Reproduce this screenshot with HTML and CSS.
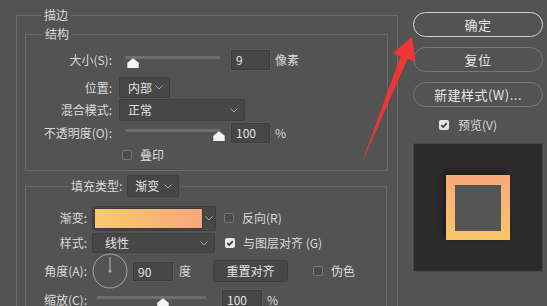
FILE: index.html
```html
<!DOCTYPE html>
<html lang="zh-CN">
<head>
<meta charset="utf-8">
<title>描边</title>
<link rel="stylesheet" href="styles.css">
</head>
<body>
<div class="dialog">
  <fieldset class="group outer">
    <legend class="legend legend-outer">描边</legend>
    <fieldset class="group struct">
      <legend class="legend legend-struct">结构</legend>
      <div class="row r-size">
        <span class="label">大小(S):</span>
        <div class="slider s-short"><span class="track"></span><span class="thumb" style="left:2px"><svg width="12" height="10" viewBox="0 0 12 10"><path d="M6 0.3 L11.7 4.8 L11.7 10 L0.3 10 L0.3 4.8 Z" fill="#f4f4f4"/></svg></span></div>
        <span class="field f-num">9</span>
        <span class="unit">像素</span>
      </div>
      <div class="row r-pos">
        <span class="label">位置:</span>
        <div class="select sel-pos"><span>内部</span><svg class="chev" width="8" height="5" viewBox="0 0 8 5"><path d="M0.5 0.5 L4 4 L7.5 0.5" fill="none" stroke="#a8a8a8"/></svg></div>
      </div>
      <div class="row r-mode">
        <span class="label">混合模式:</span>
        <div class="select sel-mode"><span>正常</span><svg class="chev" width="8" height="5" viewBox="0 0 8 5"><path d="M0.5 0.5 L4 4 L7.5 0.5" fill="none" stroke="#a8a8a8"/></svg></div>
      </div>
      <div class="row r-opacity">
        <span class="label">不透明度(O):</span>
        <div class="slider s-short"><span class="track"></span><span class="thumb" style="left:88px"><svg width="12" height="10" viewBox="0 0 12 10"><path d="M6 0.3 L11.7 4.8 L11.7 10 L0.3 10 L0.3 4.8 Z" fill="#f4f4f4"/></svg></span></div>
        <span class="field f-num">100</span>
        <span class="unit">%</span>
      </div>
      <div class="row r-over">
        <span class="label"></span>
        <span class="check off cb-over"></span>
        <span class="check-label">叠印</span>
      </div>
    </fieldset>

    <fieldset class="group fill">
      <legend class="legend legend-fill">
        <span class="fill-type">填充类型:</span>
        <span class="select sel-fill"><span>渐变</span><svg class="chev" width="8" height="5" viewBox="0 0 8 5"><path d="M0.5 0.5 L4 4 L7.5 0.5" fill="none" stroke="#a8a8a8"/></svg></span>
      </legend>
      <div class="row r-grad">
        <span class="label l-fill">渐变:</span>
        <div class="grad-select"><span class="swatch"></span><span class="grad-arrow"><svg width="8" height="5" viewBox="0 0 8 5"><path d="M0.5 0.5 L4 4 L7.5 0.5" fill="none" stroke="#a8a8a8"/></svg></span></div>
        <span class="check off cb-rev"></span>
        <span class="check-label">反向(R)</span>
      </div>
      <div class="row r-style">
        <span class="label l-fill">样式:</span>
        <div class="select sel-style"><span>线性</span><svg class="chev" width="8" height="5" viewBox="0 0 8 5"><path d="M0.5 0.5 L4 4 L7.5 0.5" fill="none" stroke="#a8a8a8"/></svg></div>
        <span class="check on cb-align"><svg width="10" height="10" viewBox="0 0 10 10"><path d="M2.3 5.2 L4.2 7.1 L7.8 3.1" fill="none" stroke="#3a3a3a" stroke-width="1.7"/></svg></span>
        <span class="check-label">与图层对齐 (G)</span>
      </div>
      <div class="row r-angle">
        <span class="label l-fill">角度(A):</span>
        <svg class="dial" width="36" height="36" viewBox="0 0 36 36"><circle cx="18" cy="18" r="17" fill="none" stroke="#a9a9a9" stroke-width="1"/><line x1="18" y1="18" x2="18" y2="4" stroke="#a9a9a9" stroke-width="1.2"/><circle cx="18" cy="18" r="1.5" fill="#a9a9a9"/></svg>
        <span class="field f-angle">90</span>
        <span class="unit u-deg">度</span>
        <span class="btn-reset">重置对齐</span>
        <span class="check off cb-dither"></span>
        <span class="check-label">伪色</span>
      </div>
      <div class="row r-scale">
        <span class="label l-fill">缩放(C):</span>
        <div class="slider s-long"><span class="track"></span><span class="thumb" style="left:60px"><svg width="12" height="10" viewBox="0 0 12 10"><path d="M6 0.3 L11.7 4.8 L11.7 10 L0.3 10 L0.3 4.8 Z" fill="#f4f4f4"/></svg></span></div>
        <span class="field f-scale">100</span>
        <span class="unit">%</span>
      </div>
    </fieldset>
  </fieldset>

  <div class="side">
    <div class="btn btn-primary">确定</div>
    <div class="btn">复位</div>
    <div class="btn">新建样式(W)...</div>
    <div class="preview-check">
      <span class="check on"><svg width="10" height="10" viewBox="0 0 10 10"><path d="M2.3 5.2 L4.2 7.1 L7.8 3.1" fill="none" stroke="#3a3a3a" stroke-width="1.7"/></svg></span>
      <span class="check-label">预览(V)</span>
    </div>
    <div class="preview">
      <div class="frame"><div class="frame-inner"></div></div>
    </div>
  </div>
</div>

<svg class="arrow" width="547" height="306" viewBox="0 0 547 306">
  <polygon points="361,165 400.5,56.5 393,53 412,37 415.5,61.5 407.5,59" fill="#f03535"/>
</svg>
</body>
</html>
```

FILE: styles.css
```css
* {
  box-sizing: border-box;
}

html,
body {
  margin: 0;
  padding: 0;
}

body {
  width: 547px;
  height: 306px;
  overflow: hidden;
  position: relative;
  background: #535353;
  color: #dadada;
  font-family: "Noto Sans CJK SC", "Noto Sans", sans-serif;
  font-size: 12px;
  line-height: 16px;
}

.dialog {
  display: flex;
  align-items: flex-start;
  padding-left: 16px;
}

/* group boxes */
.group {
  margin: 0;
  min-width: 0;
  border: 1px solid #6a6a6a;
}

.legend {
  padding: 0 3px;
  line-height: 16px;
}

.outer {
  width: 382px;
  height: 330px;
  margin-top: 7px;
  padding: 3px 9px 0 8px;
  flex: none;
}

.legend-outer {
  margin-left: 16px;
}

.struct {
  width: 363px;
  height: 145px;
  padding: 8px 0 0 0;
}

.legend-struct {
  margin-left: 16px;
}

.fill {
  width: 362px;
  margin-top: 4px;
  padding: 9px 0 0 0;
  height: 140px;
}

.legend-fill {
  margin-left: 42px;
  display: flex;
  align-items: center;
  height: 22px;
}

.fill-type {
  margin-right: 5px;
}

/* rows */
.row {
  display: flex;
  align-items: center;
}

.label {
  width: 86px;
  flex: none;
  text-align: right;
}

.label.l-fill {
  width: 61px;
}

.r-size { height: 20px; }
.r-pos { height: 21px; margin-top: 7px; }
.r-mode { height: 22px; margin-top: 1px; }
.r-opacity { height: 20px; margin-top: 2px; }
.r-over { height: 16px; margin-top: 4px; }

.r-grad { height: 24px; }
.r-style { height: 20px; margin-top: 3px; }
.r-angle { height: 36px; }
.r-scale { height: 20px; margin-top: 1px; }

/* slider */
.slider {
  position: relative;
  height: 20px;
  flex: none;
}

.s-short {
  width: 95px;
  margin-left: 13px;
}

.s-long {
  width: 109px;
  margin-left: 10px;
}

.track {
  display: block;
  margin-top: 6px;
  height: 3px;
  background: #6e6e6e;
  border-radius: 1px;
}

.thumb {
  position: absolute;
  top: 8px;
  width: 12px;
  height: 10px;
  line-height: 0;
}

/* fields */
.field {
  height: 20px;
  background: #474747;
  border: 1px solid #3d3d3d;
  box-shadow: 0 0 0 1px #595959;
  padding-left: 4px;
  line-height: 18px;
  color: #e2e2e2;
  flex: none;
}

.f-num {
  width: 39px;
  margin-left: 11px;
}

.f-angle {
  width: 40px;
  height: 19px;
  line-height: 17px;
  margin-left: 5px;
}

.f-scale {
  width: 40px;
  margin-left: 16px;
}

.unit {
  margin-left: 5px;
}

.u-deg {
  margin-left: 6px;
}

/* selects */
.select {
  display: flex;
  align-items: center;
  justify-content: space-between;
  background: #474747;
  border: 1px solid #3e3e3e;
  border-radius: 2px;
  padding: 0 6px 0 8px;
  color: #e2e2e2;
  flex: none;
}

.chev {
  flex: none;
}

.sel-pos {
  width: 51px;
  height: 21px;
  margin-left: 7px;
}

.sel-mode {
  width: 126px;
  height: 22px;
  margin-left: 7px;
}

.sel-fill {
  width: 52px;
  height: 22px;
  padding-left: 7px;
}

.sel-style {
  width: 123px;
  height: 20px;
  margin-left: 5px;
  padding-left: 12px;
}

.grad-select {
  display: flex;
  width: 124px;
  height: 25px;
  margin-left: 5px;
  background: #474747;
  border: 1px solid #3e3e3e;
  border-radius: 2px;
  padding: 1px 0 1px 1px;
  flex: none;
}

.swatch {
  width: 109px;
  height: 21px;
  background: linear-gradient(to right, #f8ca6c, #f9a77e);
  border: 1px solid #3a3a3a;
}

.grad-arrow {
  flex: 1;
  display: flex;
  align-items: center;
  justify-content: center;
}

/* checkboxes */
.check {
  width: 10px;
  height: 10px;
  border-radius: 2px;
  flex: none;
  line-height: 0;
}

.check.off {
  border: 1px solid #777;
  background: #4a4a4a;
}

.check.on {
  background: #e6e6e6;
}

.check-label {
  margin-left: 8px;
}

.cb-over { margin-left: 10px; }
.cb-rev { margin-left: 8px; }
.cb-align { margin-left: 10px; }
.cb-dither { margin-left: 25px; }

.dial {
  margin-left: 5px;
  flex: none;
}

.btn-reset {
  width: 75px;
  height: 22px;
  margin-left: 22px;
  background: #474747;
  border: 1px solid #3e3e3e;
  border-radius: 3px;
  text-align: center;
  line-height: 20px;
  color: #e2e2e2;
  flex: none;
}

/* right side */
.side {
  width: 130px;
  margin-left: 15px;
  padding-top: 12px;
  flex: none;
  display: flex;
  flex-direction: column;
}

.btn {
  height: 25px;
  margin-bottom: 10px;
  border: 1px solid #787878;
  border-radius: 13px;
  text-align: center;
  line-height: 23px;
  font-size: 13px;
  letter-spacing: 0.5px;
  color: #e6e6e6;
}

.btn-primary {
  border: 1.5px solid #d4d4d4;
}

.preview-check {
  display: flex;
  align-items: center;
  height: 12px;
  margin-top: 2px;
  padding-left: 26px;
}

.preview-check .check-label {
  margin-left: 9px;
}

.preview {
  margin-top: 12px;
  width: 130px;
  height: 129px;
  background: #2b2b2b;
  border: 1px solid #4a4a4a;
  display: flex;
  align-items: center;
  justify-content: center;
}

.frame {
  width: 64px;
  height: 65px;
  padding: 10px 9px 9px 9px;
  background: linear-gradient(to bottom, #f9a87c, #f6c76a);
  box-shadow: -3px -3px 5px rgba(0, 0, 0, 0.35);
}

.frame-inner {
  width: 100%;
  height: 100%;
  background: #555555;
}

/* annotation arrow overlay */
.arrow {
  position: absolute;
  left: 0;
  top: 0;
  pointer-events: none;
}
```
